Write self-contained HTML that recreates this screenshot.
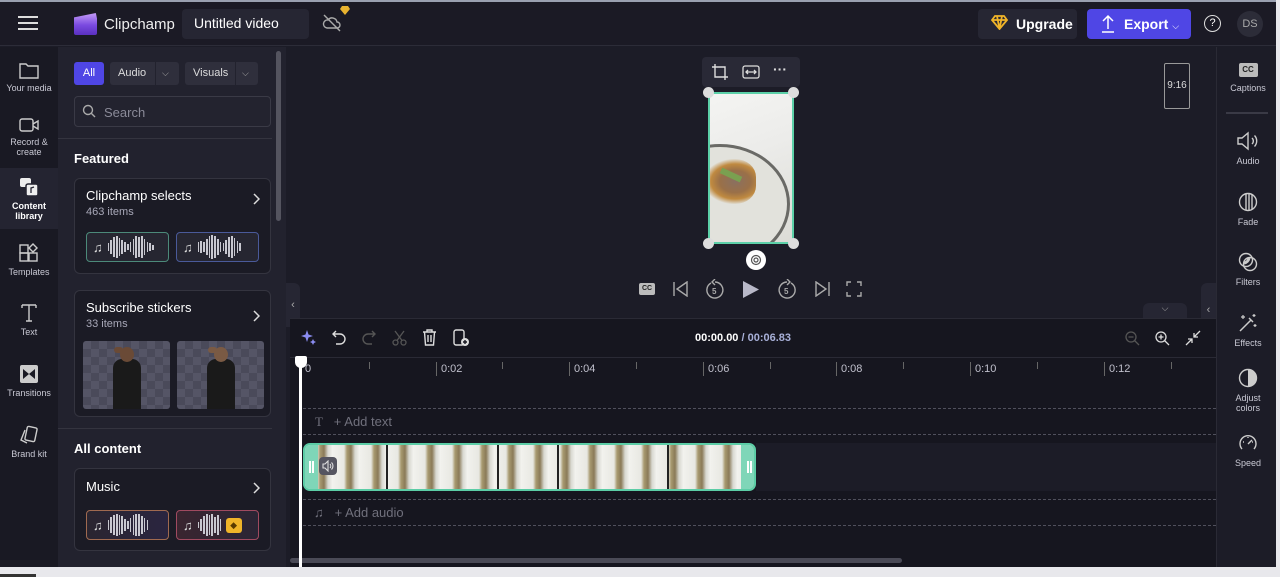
<!DOCTYPE html>
<html><head><meta charset="utf-8"><style>
*{box-sizing:border-box;margin:0;padding:0}
body{width:1280px;height:577px;overflow:hidden;background:#1c1c27;font-family:"Liberation Sans",sans-serif;color:#fff;position:relative}
.a{position:absolute}
svg{display:block}
.nav{color:#c9c9d4;font-size:9px;text-align:center;width:58px;left:0;line-height:10px}
.nav svg{margin:0 auto 4px}
.card{position:absolute;left:74px;width:197px;background:#1b1b25;border:1px solid #34343f;border-radius:6px}
.ct{font-size:13px;color:#fff;position:absolute;left:11px;top:9px}
.cs{font-size:11px;color:#a8a8b8;position:absolute;left:11px;top:27px}
.chev{position:absolute;right:10px;top:14px}
.wave{position:absolute;height:30px;width:83px;border-radius:4px;border:1px solid;background:#262631;display:flex;align-items:center;padding-left:6px;gap:1.2px;font-size:13px;color:#ddd}
.wave i{display:block;width:1.6px;background:#c8c8d0}
.rp{position:absolute;left:1216px;width:64px;text-align:center;font-size:9px;color:#c9c9d4;line-height:10px}
.rp svg{margin:0 auto 5px}
.tick{position:absolute;top:362px;width:1px;height:14px;background:#666}
.tl{position:absolute;top:363px;font-size:11px;color:#c0c0cc}
.chk{background-color:#555566;background-image:linear-gradient(45deg,#4a4a5a 25%,transparent 25%,transparent 75%,#4a4a5a 75%),linear-gradient(45deg,#4a4a5a 25%,transparent 25%,transparent 75%,#4a4a5a 75%);background-size:16px 16px;background-position:0 0,8px 8px}
</style></head><body>
<!-- top bar -->
<div class="a" style="left:0;top:0;width:1280px;height:2px;background:#9aa0b0"></div>
<div class="a" style="left:0;top:2px;width:1280px;height:44px;background:#1b1a25;border-bottom:1px solid #2c2c38"></div>
<div class="a" style="left:18px;top:16px;width:20px;height:2px;background:#ddd;box-shadow:0 6px 0 #ddd,0 12px 0 #ddd"></div>
<div class="a" style="left:74px;top:13px;width:23px;height:22px;background:linear-gradient(#c59cf8,#7a4ae0 55%,#5a30c0);border-radius:2px;clip-path:polygon(0 20%,95% 0,100% 25%,100% 100%,0 100%)"></div>
<div class="a" style="left:104px;top:16px;font-size:15px;color:#eee">Clipchamp</div>
<div class="a" style="left:182px;top:9px;width:127px;height:30px;background:#262633;border-radius:4px;font-size:14px;padding:6px 12px;color:#fff">Untitled video</div>
<svg class="a" style="left:322px;top:14px" width="20" height="18" viewBox="0 0 20 18" fill="none" stroke="#aaa" stroke-width="1.4"><path d="M5 14h10a3 3 0 0 0 0-6 5 5 0 0 0-9-2 4 4 0 0 0-1 8z"/><path d="M2 1l16 16"/></svg>
<svg class="a" style="left:340px;top:6px" width="10" height="9" viewBox="0 0 10 9"><path d="M2 0h6l2 3-5 6-5-6z" fill="#e8b22f"/></svg>
<div class="a" style="left:978px;top:9px;width:99px;height:30px;background:#262633;border-radius:4px;font-size:14px;font-weight:bold;padding:7px 0 0 38px">Upgrade</div>
<svg class="a" style="left:991px;top:15px" width="17" height="15" viewBox="0 0 17 15" fill="none" stroke="#f0b429" stroke-width="1.8"><path d="M4 1h9l3 4-7.5 9L1 5z"/><path d="M1 5h15M6 1l2.5 13M11 1L8.5 14"/></svg>
<div class="a" style="left:1087px;top:9px;width:104px;height:30px;background:#4f46e5;border-radius:4px;font-size:14px;font-weight:bold;padding:7px 0 0 37px">Export <span style="font-size:9px;font-weight:normal">⌵</span></div>
<svg class="a" style="left:1101px;top:14px" width="14" height="20" viewBox="0 0 14 20" fill="none" stroke="#fff" stroke-width="1.5"><path d="M7 15V2M2 7l5-5 5 5M1 18h12"/></svg>
<div class="a" style="left:1204px;top:15px;width:17px;height:17px;border:1.5px solid #ddd;border-radius:50%;font-size:11px;text-align:center;line-height:14px">?</div>
<div class="a" style="left:1237px;top:11px;width:26px;height:26px;background:#2c2c38;border-radius:50%;font-size:11px;color:#aaa;text-align:center;line-height:26px">DS</div>

<!-- left nav -->
<div class="a" style="left:0;top:47px;width:58px;height:520px;background:#191923"></div>
<div class="a" style="left:0;top:168px;width:58px;height:61px;background:#242431"></div>
<div class="a nav" style="top:61px"><svg width="20" height="18" viewBox="0 0 20 18" fill="none" stroke="#ccc" stroke-width="1.4"><path d="M1 3h6l2 2h10v12H1z"/></svg>Your media</div>
<div class="a nav" style="top:117px"><svg width="20" height="16" viewBox="0 0 20 16" fill="none" stroke="#ccc" stroke-width="1.4"><rect x="1" y="2" width="13" height="12" rx="2"/><path d="M14 7l5-3v8l-5-3"/></svg>Record &amp;<br>create</div>
<div class="a nav" style="top:177px;color:#fff;font-weight:bold"><svg width="20" height="20" viewBox="0 0 20 20"><rect x="1" y="1" width="11" height="9" rx="2" fill="#eee"/><rect x="7" y="7" width="12" height="12" rx="2" fill="#eee" stroke="#242431" stroke-width="1.5"/><path d="M12 16v-5l3-1" stroke="#242431" stroke-width="1.3" fill="none"/></svg>Content<br>library</div>
<div class="a nav" style="top:243px"><svg width="20" height="20" viewBox="0 0 20 20" fill="none" stroke="#ccc" stroke-width="1.4"><rect x="1" y="10" width="8" height="8"/><rect x="10" y="10" width="8" height="8"/><rect x="1" y="2" width="8" height="8"/><path d="M14 1l4 4-4 4-4-4z"/></svg>Templates</div>
<div class="a nav" style="top:303px"><svg width="18" height="20" viewBox="0 0 18 20" fill="none" stroke="#ccc" stroke-width="1.4"><path d="M2 2h14M9 2v16M6 18h6M2 2v3M16 2v3"/></svg>Text</div>
<div class="a nav" style="top:364px"><svg width="20" height="20" viewBox="0 0 20 20"><rect x="1" y="1" width="18" height="18" rx="2" fill="#ccc"/><path d="M4 5l6 5-6 5zM16 5l-6 5 6 5z" fill="#191923"/></svg>Transitions</div>
<div class="a nav" style="top:425px"><svg width="20" height="20" viewBox="0 0 20 20" fill="none" stroke="#ccc" stroke-width="1.4"><rect x="7" y="2" width="10" height="14" rx="1.5" transform="rotate(12 12 9)"/><path d="M6 5L2 15l6 3"/></svg>Brand kit</div>

<!-- library panel -->
<div class="a" style="left:58px;top:47px;width:228px;height:520px;background:#22222e"></div>
<div class="a" style="left:276px;top:51px;width:5px;height:170px;background:#54545f;border-radius:3px"></div>
<div class="a" style="left:74px;top:62px;width:30px;height:23px;background:#4f46e5;border-radius:3px;font-size:11px;text-align:center;line-height:23px">All</div>
<div class="a" style="left:110px;top:62px;width:69px;height:23px;background:#2f2f3c;border-radius:3px;font-size:11px;line-height:23px;padding-left:8px;color:#ddd">Audio<span style="position:absolute;left:45px;top:0;height:23px;border-left:1px solid #22222e;padding-left:6px;color:#aaa;font-size:9px">⌵</span></div>
<div class="a" style="left:185px;top:62px;width:73px;height:23px;background:#2f2f3c;border-radius:3px;font-size:11px;line-height:23px;padding-left:8px;color:#ddd">Visuals<span style="position:absolute;left:50px;top:0;height:23px;border-left:1px solid #22222e;padding-left:6px;color:#aaa;font-size:9px">⌵</span></div>
<div class="a" style="left:74px;top:96px;width:197px;height:31px;border:1px solid #3a3a46;border-radius:4px;background:#23232f;font-size:13px;color:#8a8a98;padding:8px 0 0 29px">Search</div>
<svg class="a" style="left:82px;top:104px" width="14" height="14" viewBox="0 0 14 14" fill="none" stroke="#aaa" stroke-width="1.4"><circle cx="6" cy="6" r="4.5"/><path d="M9.5 9.5L13 13"/></svg>
<div class="a" style="left:58px;top:138px;width:214px;height:1px;background:#34343f"></div>
<div class="a" style="left:74px;top:151px;font-size:13px;font-weight:bold">Featured</div>
<div class="card" style="top:178px;height:96px"><div class="ct">Clipchamp selects</div><div class="cs">463 items</div>
<svg class="chev" width="8" height="12" viewBox="0 0 8 12" fill="none" stroke="#ddd" stroke-width="1.5"><path d="M2 1l5 5-5 5"/></svg>
<div class="wave" style="left:11px;top:53px;border-color:#4c8a7a">♫&nbsp;<i style="height:8px"></i><i style="height:14px"></i><i style="height:20px"></i><i style="height:22px"></i><i style="height:18px"></i><i style="height:14px"></i><i style="height:10px"></i><i style="height:6px"></i><i style="height:10px"></i><i style="height:16px"></i><i style="height:22px"></i><i style="height:20px"></i><i style="height:22px"></i><i style="height:16px"></i><i style="height:10px"></i><i style="height:8px"></i><i style="height:5px"></i></div>
<div class="wave" style="left:101px;top:53px;border-color:#4a5a9a">♫&nbsp;<i style="height:10px"></i><i style="height:12px"></i><i style="height:10px"></i><i style="height:16px"></i><i style="height:22px"></i><i style="height:24px"></i><i style="height:22px"></i><i style="height:16px"></i><i style="height:10px"></i><i style="height:8px"></i><i style="height:14px"></i><i style="height:20px"></i><i style="height:22px"></i><i style="height:18px"></i><i style="height:12px"></i><i style="height:8px"></i></div></div>
<div class="card" style="top:290px;height:127px"><div class="ct">Subscribe stickers</div><div class="cs">33 items</div>
<svg class="chev" style="top:19px" width="8" height="12" viewBox="0 0 8 12" fill="none" stroke="#ddd" stroke-width="1.5"><path d="M2 1l5 5-5 5"/></svg>
<div class="a chk" style="left:8px;top:50px;width:87px;height:68px;border-radius:3px;overflow:hidden"><div class="a" style="left:30px;top:18px;width:28px;height:52px;background:#1a1a1a;border-radius:9px 9px 0 0"></div><div class="a" style="left:37px;top:6px;width:14px;height:15px;background:#6a4a36;border-radius:50%"></div><div class="a" style="left:31px;top:6px;width:9px;height:6px;background:#6a4a36;border-radius:3px"></div></div>
<div class="a chk" style="left:102px;top:50px;width:87px;height:68px;border-radius:3px;overflow:hidden"><div class="a" style="left:30px;top:18px;width:28px;height:52px;background:#1a1a1a;border-radius:9px 9px 0 0"></div><div class="a" style="left:37px;top:6px;width:14px;height:15px;background:#7a5a44;border-radius:50%"></div><div class="a" style="left:31px;top:6px;width:9px;height:6px;background:#7a5a44;border-radius:3px"></div></div></div>
<div class="a" style="left:58px;top:428px;width:214px;height:1px;background:#34343f"></div>
<div class="a" style="left:74px;top:441px;font-size:13px;font-weight:bold">All content</div>
<div class="card" style="top:468px;height:83px"><div class="ct" style="top:10px">Music</div>
<svg class="chev" style="top:13px" width="8" height="12" viewBox="0 0 8 12" fill="none" stroke="#ddd" stroke-width="1.5"><path d="M2 1l5 5-5 5"/></svg>
<div class="wave" style="left:11px;top:41px;border-color:#a06a50;background:linear-gradient(90deg,#2a2530,#2a2540)">♫&nbsp;<i style="height:10px"></i><i style="height:16px"></i><i style="height:20px"></i><i style="height:22px"></i><i style="height:20px"></i><i style="height:18px"></i><i style="height:12px"></i><i style="height:8px"></i><i style="height:14px"></i><i style="height:20px"></i><i style="height:22px"></i><i style="height:22px"></i><i style="height:18px"></i><i style="height:14px"></i><i style="height:10px"></i></div>
<div class="wave" style="left:101px;top:41px;border-color:#a04a60;background:linear-gradient(90deg,#3a2530,#2a2535)">♫&nbsp;<i style="height:6px"></i><i style="height:12px"></i><i style="height:18px"></i><i style="height:22px"></i><i style="height:20px"></i><i style="height:22px"></i><i style="height:16px"></i><i style="height:20px"></i><i style="height:12px"></i><span style="margin-left:3px;width:16px;height:15px;background:#f0b429;border-radius:3px;color:#5a3a00;font-size:9px;text-align:center;line-height:15px">◆</span></div></div>

<!-- preview -->
<div class="a" style="left:286px;top:47px;width:930px;height:271px;background:#1c1c27"></div>
<div class="a" style="left:702px;top:57px;width:98px;height:30px;background:#292936;border-radius:4px"></div>
<svg class="a" style="left:711px;top:63px" width="18" height="18" viewBox="0 0 18 18" fill="none" stroke="#ddd" stroke-width="1.4"><path d="M4 1v13h13M1 4h13v13"/></svg>
<svg class="a" style="left:742px;top:65px" width="18" height="14" viewBox="0 0 18 14" fill="none" stroke="#ddd" stroke-width="1.3"><rect x="1" y="1" width="16" height="12" rx="2"/><path d="M4 7h10M6 5L4 7l2 2M12 5l2 2-2 2"/></svg>
<div class="a" style="left:773px;top:61px;font-size:14px;color:#ddd;font-weight:bold">···</div>
<div class="a" style="left:708px;top:92px;width:86px;height:152px;border:2px solid #5cd0a8;background:linear-gradient(160deg,#f4f4f2 0%,#ececea 40%,#dcdcd6 100%);overflow:hidden">
<div class="a" style="left:-60px;top:50px;width:140px;height:120px;border-radius:50%;background:#e2e2dc;border:3px solid #6a6a66"></div>
<div class="a" style="left:-6px;top:65px;width:52px;height:45px;border-radius:40%;background:radial-gradient(ellipse at 60% 50%,#8a7060 0,#9a7048 35%,#c08a40 55%,transparent 72%)"></div>
<div class="a" style="left:10px;top:78px;width:22px;height:6px;background:#7aa050;transform:rotate(25deg)"></div></div>
<div class="a" style="left:703px;top:87px;width:11px;height:11px;border-radius:50%;background:#ddd"></div>
<div class="a" style="left:788px;top:87px;width:11px;height:11px;border-radius:50%;background:#ddd"></div>
<div class="a" style="left:703px;top:238px;width:11px;height:11px;border-radius:50%;background:#ddd"></div>
<div class="a" style="left:788px;top:238px;width:11px;height:11px;border-radius:50%;background:#ddd"></div>
<div class="a" style="left:746px;top:250px;width:20px;height:20px;border-radius:50%;background:#fff"></div>
<svg class="a" style="left:750px;top:254px" width="12" height="12" viewBox="0 0 12 12" fill="none" stroke="#555" stroke-width="1.2"><circle cx="6" cy="6" r="4.5"/><circle cx="6" cy="6" r="2"/></svg>
<div class="a" style="left:639px;top:283px;width:16px;height:12px;background:#bbb;border-radius:2px;font-size:7px;color:#222;text-align:center;line-height:12px;font-weight:bold">CC</div>
<svg class="a" style="left:672px;top:281px" width="18" height="16" viewBox="0 0 18 16" fill="none" stroke="#aaa" stroke-width="1.4"><path d="M2 1v14M15 1L5 8l10 7z"/></svg>
<svg class="a" style="left:705px;top:279px" width="20" height="20" viewBox="0 0 20 20" fill="none" stroke="#aaa" stroke-width="1.4"><path d="M6 4a8 8 0 1 0 4-1M10 0L7 3l3 3"/><text x="7" y="15" font-size="8" fill="#aaa" stroke="none" font-family="Liberation Sans" font-weight="bold">5</text></svg>
<svg class="a" style="left:742px;top:280px" width="18" height="19" viewBox="0 0 18 19"><path d="M1 1l16 8.5L1 18z" fill="#b8b8c8"/></svg>
<svg class="a" style="left:777px;top:279px" width="20" height="20" viewBox="0 0 20 20" fill="none" stroke="#aaa" stroke-width="1.4"><path d="M14 4a8 8 0 1 1-4-1M10 0l3 3-3 3"/><text x="7" y="15" font-size="8" fill="#aaa" stroke="none" font-family="Liberation Sans" font-weight="bold">5</text></svg>
<svg class="a" style="left:813px;top:281px" width="18" height="16" viewBox="0 0 18 16" fill="none" stroke="#aaa" stroke-width="1.4"><path d="M16 1v14M3 1l10 7-10 7z"/></svg>
<svg class="a" style="left:846px;top:281px" width="16" height="16" viewBox="0 0 16 16" fill="none" stroke="#aaa" stroke-width="1.4"><path d="M1 5V1h4M11 1h4v4M15 11v4h-4M5 15H1v-4"/></svg>
<div class="a" style="left:1164px;top:63px;width:26px;height:46px;border:1.5px solid #999;border-radius:2px;font-size:10px;text-align:center;line-height:43px;color:#ddd">9:16</div>
<div class="a" style="left:1143px;top:303px;width:44px;height:15px;background:#262633;border-radius:6px 6px 0 0;text-align:center;font-size:9px;color:#aaa">⌵</div>
<div class="a" style="left:286px;top:283px;width:14px;height:44px;background:#262633;border-radius:0 6px 6px 0;font-size:11px;color:#aaa;line-height:44px;text-align:center">‹</div>
<div class="a" style="left:1201px;top:283px;width:15px;height:54px;background:#262633;border-radius:6px 0 0 6px;font-size:11px;color:#aaa;line-height:54px;text-align:center">‹</div>

<!-- timeline -->
<div class="a" style="left:290px;top:318px;width:926px;height:249px;background:#16161f;border-top:1px solid #2a2a35"></div>
<div class="a" style="left:290px;top:357px;width:926px;height:1px;background:#2a2a35"></div>
<svg class="a" style="left:301px;top:330px" width="16" height="16" viewBox="0 0 16 16"><path d="M6 0l1.5 4.5L12 6 7.5 7.5 6 12 4.5 7.5 0 6l4.5-1.5z" fill="#8a8cf0"/><path d="M12 9l1 2 2 1-2 1-1 2-1-2-2-1 2-1z" fill="#8a8cf0"/></svg>
<svg class="a" style="left:332px;top:330px" width="14" height="15" viewBox="0 0 14 15" fill="none" stroke="#ddd" stroke-width="1.4"><path d="M4 1L1 4l3 3M1 4h7a5 5 0 0 1 0 10H4"/></svg>
<svg class="a" style="left:362px;top:330px" width="14" height="15" viewBox="0 0 14 15" fill="none" stroke="#555" stroke-width="1.4"><path d="M10 1l3 3-3 3M13 4H6a5 5 0 0 0 0 10h4"/></svg>
<svg class="a" style="left:392px;top:330px" width="15" height="16" viewBox="0 0 15 16" fill="none" stroke="#555" stroke-width="1.3"><circle cx="3.5" cy="12.5" r="2.5"/><circle cx="11.5" cy="12.5" r="2.5"/><path d="M5 10.5L12 1M10 10.5L3 1"/></svg>
<svg class="a" style="left:422px;top:329px" width="15" height="17" viewBox="0 0 15 17" fill="none" stroke="#ddd" stroke-width="1.4"><path d="M1 3h13M5 3V1h5v2M2.5 3l1 13h8l1-13M6 6v7M9 6v7"/></svg>
<svg class="a" style="left:453px;top:329px" width="17" height="18" viewBox="0 0 17 18" fill="none" stroke="#ddd" stroke-width="1.4"><rect x="1" y="1" width="10" height="15" rx="2"/><circle cx="12" cy="13" r="4" fill="#ddd" stroke="none"/><path d="M12 11v4M10 13h4" stroke="#16161f"/></svg>
<div class="a" style="left:695px;top:332px;font-size:11px;font-weight:bold;color:#fff">00:00.00 <span style="color:#a8b0d8">/ 00:06.83</span></div>
<svg class="a" style="left:1125px;top:331px" width="15" height="15" viewBox="0 0 15 15" fill="none" stroke="#555" stroke-width="1.3"><circle cx="6" cy="6" r="5"/><path d="M9.5 9.5L14 14M3.5 6h5"/></svg>
<svg class="a" style="left:1155px;top:331px" width="15" height="15" viewBox="0 0 15 15" fill="none" stroke="#ddd" stroke-width="1.3"><circle cx="6" cy="6" r="5"/><path d="M9.5 9.5L14 14M3.5 6h5M6 3.5v5"/></svg>
<svg class="a" style="left:1185px;top:330px" width="16" height="16" viewBox="0 0 16 16" fill="none" stroke="#ddd" stroke-width="1.3"><path d="M15 1L9 7M9 3v4h4M1 15l6-6M7 13V9H3"/></svg>
<div class="a" style="left:305px;top:363px;font-size:11px;color:#c0c0cc">0</div>
<div class="tick" style="left:369px;height:7px"></div>
<div class="tick" style="left:436px"></div><div class="tl" style="left:441px">0:02</div>
<div class="tick" style="left:502px;height:7px"></div>
<div class="tick" style="left:569px"></div><div class="tl" style="left:574px">0:04</div>
<div class="tick" style="left:636px;height:7px"></div>
<div class="tick" style="left:703px"></div><div class="tl" style="left:708px">0:06</div>
<div class="tick" style="left:770px;height:7px"></div>
<div class="tick" style="left:836px"></div><div class="tl" style="left:841px">0:08</div>
<div class="tick" style="left:903px;height:7px"></div>
<div class="tick" style="left:970px"></div><div class="tl" style="left:975px">0:10</div>
<div class="tick" style="left:1037px;height:7px"></div>
<div class="tick" style="left:1104px"></div><div class="tl" style="left:1109px">0:12</div>
<div class="tick" style="left:1171px;height:7px"></div>
<div class="a" style="left:303px;top:408px;width:913px;height:27px;border-top:1px dashed #50505c;border-bottom:1px dashed #50505c"></div>
<div class="a" style="left:315px;top:414px;font-size:13px;color:#70707c"><span style="font-family:'Liberation Serif'">T</span>&nbsp;&nbsp; + Add text</div>
<div class="a" style="left:303px;top:443px;width:453px;height:48px;border:2px solid #5ccda6;border-radius:7px;background:repeating-linear-gradient(90deg,#f2f2ee 0,#e8e8e2 12px,#a89a70 15px,#8a7a58 19px,#d8d8d0 23px,#f0f0ec 27px);overflow:hidden">
<div class="a" style="left:0;top:0;width:13px;height:44px;background:#7fd6b8"></div>
<div class="a" style="left:4px;top:16px;width:2px;height:12px;background:#fff;box-shadow:3px 0 0 #fff"></div>
<div class="a" style="right:0;top:0;width:13px;height:44px;background:#7fd6b8"></div>
<div class="a" style="right:5px;top:16px;width:2px;height:12px;background:#fff;box-shadow:3px 0 0 #fff"></div>
<div class="a" style="left:81px;top:0;width:1.5px;height:44px;background:#222"></div>
<div class="a" style="left:192px;top:0;width:1.5px;height:44px;background:#222"></div>
<div class="a" style="left:252px;top:0;width:1.5px;height:44px;background:#222"></div>
<div class="a" style="left:362px;top:0;width:1.5px;height:44px;background:#222"></div>
<div class="a" style="left:14px;top:12px;width:18px;height:18px;background:#555560;border-radius:4px"><svg style="margin:3px" width="12" height="12" viewBox="0 0 12 12" fill="none" stroke="#ddd" stroke-width="1.1"><path d="M1 4h2l3-3v10L3 8H1zM8 4a3 3 0 0 1 0 4M9.5 2.5a5 5 0 0 1 0 7"/></svg></div></div>
<div class="a" style="left:756px;top:443px;width:460px;height:48px;background:#1c1c27"></div>
<div class="a" style="left:303px;top:499px;width:913px;height:27px;border-top:1px dashed #50505c;border-bottom:1px dashed #50505c"></div>
<div class="a" style="left:314px;top:505px;font-size:13px;color:#70707c">♫&nbsp;&nbsp; + Add audio</div>
<div class="a" style="left:290px;top:558px;width:612px;height:5px;background:#4a4a56;border-radius:3px"></div>
<div class="a" style="left:299px;top:356px;width:3px;height:211px;background:#fff"></div>
<div class="a" style="left:295px;top:356px;width:12px;height:12px;background:#fff;border-radius:2px 2px 6px 6px"></div>

<!-- right panel -->
<div class="a" style="left:1216px;top:47px;width:64px;height:520px;background:#1c1c27;border-left:1px solid #2a2a35"></div>
<div class="rp" style="top:63px"><div style="margin:0 auto 6px;width:19px;height:14px;background:#bbb;border-radius:2px;font-size:8px;color:#222;font-weight:bold;line-height:14px">CC</div>Captions</div>
<div class="a" style="left:1226px;top:112px;width:42px;height:2px;background:#3a3a46"></div>
<div class="rp" style="top:131px"><svg width="22" height="20" viewBox="0 0 22 20" fill="none" stroke="#ccc" stroke-width="1.4"><path d="M1 7h4l6-5v16l-6-5H1zM15 7a4 4 0 0 1 0 6M17.5 4.5a8 8 0 0 1 0 11"/></svg>Audio</div>
<div class="rp" style="top:192px"><svg width="20" height="20" viewBox="0 0 20 20" fill="none" stroke="#ccc" stroke-width="1.4"><circle cx="10" cy="10" r="8.5"/><path d="M8 2v16M11 1.5v17M14 2.5v15"/></svg>Fade</div>
<div class="rp" style="top:252px"><svg width="20" height="20" viewBox="0 0 20 20" fill="none" stroke="#ccc" stroke-width="1.4"><circle cx="8" cy="8" r="6.5"/><circle cx="12" cy="12" r="6.5"/><path d="M6 11a6 6 0 0 0 5-5" stroke-width="3"/></svg>Filters</div>
<div class="rp" style="top:313px"><svg width="20" height="20" viewBox="0 0 20 20" fill="none" stroke="#ccc" stroke-width="1.5"><path d="M2 18L13 7M11 5l4 4"/><path d="M5 2v4M3 4h4M16 1v3M14.5 2.5h3M17 11v3M15.5 12.5h3" stroke-width="1.2"/></svg>Effects</div>
<div class="rp" style="top:368px"><svg width="20" height="20" viewBox="0 0 20 20"><circle cx="10" cy="10" r="8.5" fill="none" stroke="#ccc" stroke-width="1.4"/><path d="M10 1.5a8.5 8.5 0 0 1 0 17z" fill="#ccc"/></svg>Adjust<br>colors</div>
<div class="rp" style="top:433px"><svg width="20" height="20" viewBox="0 0 20 20" fill="none" stroke="#ccc" stroke-width="1.4"><path d="M4 16a8 8 0 1 1 12 0"/><path d="M10 11l4-4M5 9h1M10 4v1M15 9h-1"/></svg>Speed</div>
<div class="a" style="left:1276px;top:0;width:4px;height:577px;background:#e8e8ec"></div>
<!-- bottom strip -->
<div class="a" style="left:0;top:567px;width:1280px;height:10px;background:#e8e8ec"></div>
<div class="a" style="left:0;top:574px;width:36px;height:3px;background:#333"></div>
</body></html>
